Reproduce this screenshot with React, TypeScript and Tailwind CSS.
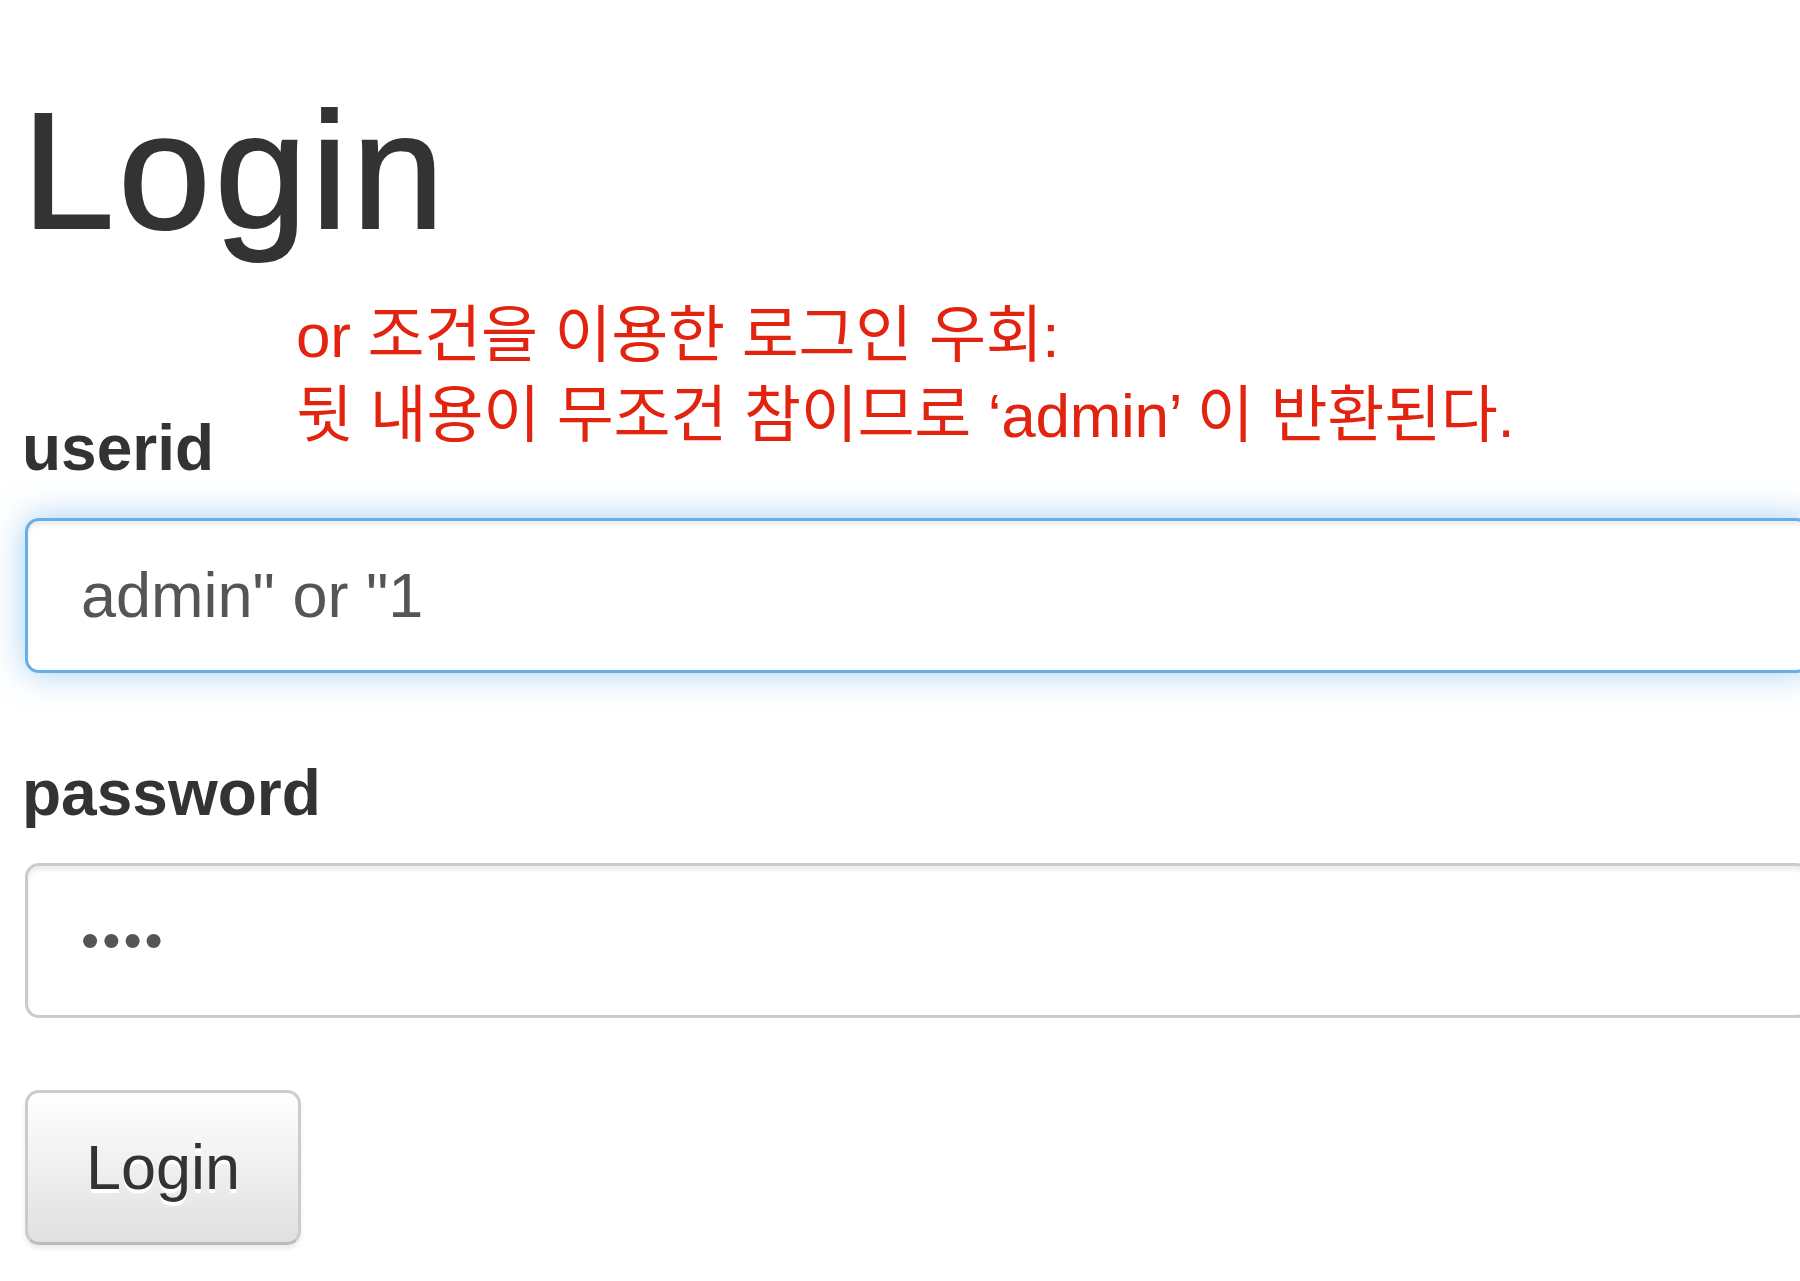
const fieldBase =
  'ml-[3px] block h-[155px] w-[1785px] rounded-[14px] border-[3px] bg-white pl-[53px] text-[#555] outline-none';

const App = () => {
  return (
    <div className="relative min-h-screen overflow-hidden bg-white font-['Liberation_Sans','Noto_Sans_CJK_KR',sans-serif] text-[#333]">
      <div className="pl-[22px] pt-[80px]">
        <h1 className="m-0 text-[166px] font-normal leading-[1.1] tracking-[4px] text-[#333] [-webkit-text-stroke:2px_#333]">
          Login
        </h1>

        <form className="mt-[140px]" onSubmit={(e) => e.preventDefault()}>
          <div className="mb-[75px]">
            <label htmlFor="userid" className="mb-[24px] block text-[64px] font-bold leading-[91px]">
              userid
            </label>
            <input
              id="userid"
              type="text"
              defaultValue={'admin" or "1'}
              className={`${fieldBase} text-[63px] border-[#66afe9] shadow-[inset_0_4px_4px_rgba(0,0,0,0.075),0_0_34px_rgba(102,175,233,0.6)]`}
            />
          </div>

          <div>
            <label htmlFor="password" className="mb-[24px] block text-[64px] font-bold leading-[91px]">
              password
            </label>
            <input
              id="password"
              type="password"
              defaultValue="1234"
              className={`${fieldBase} text-[52px] tracking-[3px] border-[#cbcbcb] shadow-[inset_0_4px_4px_rgba(0,0,0,0.075)]`}
            />
          </div>

          <button
            type="submit"
            className="ml-[3px] mt-[72px] block h-[155px] rounded-[14px] border-[3px] border-[#cccccc] border-b-[#bcbcbc] bg-gradient-to-b from-white to-[#e0e0e0] px-[58px] text-[63px] leading-none text-[#333] shadow-[0_4px_4px_rgba(0,0,0,0.075)] [text-shadow:0_4px_0_#fff]"
          >
            Login
          </button>
        </form>
      </div>

      {/* annotation laid over the form */}
      <p className="absolute left-[296px] top-[296px] m-0 text-[62px] leading-[80px] tracking-[-0.3px] text-[#e2230f]">
        or 조건을 이용한 로그인 우회:
        <br />
        뒷 내용이 무조건 참이므로 ‘admin’ 이 반환된다.
      </p>
    </div>
  );
};

export default App;
